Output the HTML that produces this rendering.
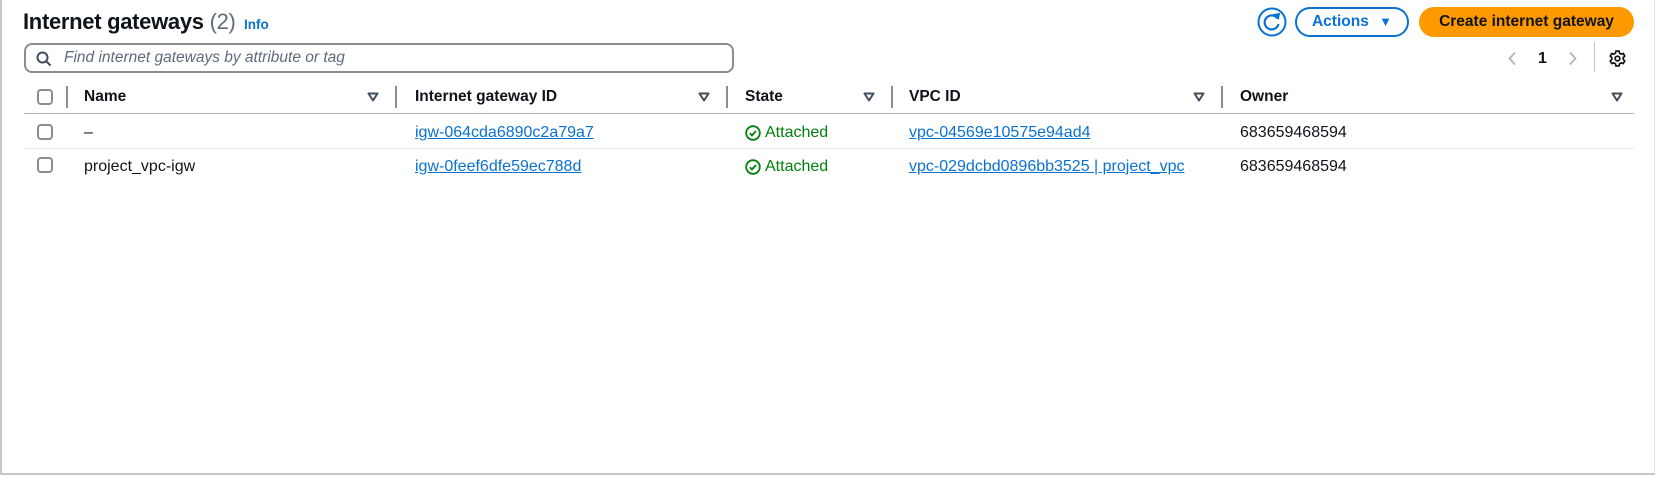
<!DOCTYPE html>
<html><head><meta charset="utf-8"><style>
*{box-sizing:border-box;margin:0;padding:0}
body{width:1656px;height:477px;background:#fff;font-family:"Liberation Sans",Arial,sans-serif;color:#0f141a;position:relative;overflow:hidden}
.a{position:absolute;white-space:nowrap}
.frame{position:absolute;left:0;top:-2px;width:1655px;height:477px;border-left:2px solid #c6c6cd;border-right:1px solid #e0e0e0;border-bottom:2px solid #c6c6cd}
h1{position:absolute;left:23px;top:9px;font-size:22px;font-weight:bold;letter-spacing:-0.3px}
h1 span{font-weight:normal;color:#5f6b7a}
.info{position:absolute;left:244px;top:17px;font-size:13.5px;font-weight:bold;color:#0972d3}
.search{position:absolute;left:24px;top:43px;width:710px;height:30px;border:2px solid #8c8c94;border-radius:8px}
.search .t{position:absolute;left:38px;top:4px;font-size:15.5px;font-style:italic;color:#5f6b7a}
.btn{position:absolute;top:7px;height:30px;border-radius:15px;font-weight:bold;font-size:15.5px;text-align:center;line-height:26px}
.act{left:1295px;width:114px;border:2px solid #0972d3;color:#0972d3}
.cr{left:1419px;width:215px;background:#ff9900;color:#0f141a;line-height:30px}
.th{top:88px;font-size:15.5px;font-weight:bold;color:#0f141a}
.sep{position:absolute;top:86px;width:2px;height:22px;background:#8c8c94}
.hl{position:absolute;left:24px;width:1610px;height:1px}
.cb{position:absolute;left:37px;width:16px;height:16px;border:2px solid #8c8c94;border-radius:4px}
.td{font-size:16px}
.lk{color:#0972d3;text-decoration:underline}
.st{color:#037f0c}
.fl{position:absolute;top:92px}
</style></head><body>
<div class="frame"></div>
<h1>Internet gateways <span>(2)</span></h1>
<div class="info">Info</div>
<div class="search"><svg class="a" style="left:10px;top:6px" width="16" height="16" viewBox="0 0 16 16"><circle cx="6.5" cy="6.5" r="5" fill="none" stroke="#414d5c" stroke-width="2"/><path d="M10 10l4.5 4.5" stroke="#414d5c" stroke-width="2"/></svg><div class="t">Find internet gateways by attribute or tag</div></div>
<svg class="a" style="left:1257px;top:7px" width="30" height="30" viewBox="0 0 30 30"><circle cx="15" cy="15" r="13.5" fill="none" stroke="#0972d3" stroke-width="2"/><path d="M20.5 11.5A7 7 0 1 0 21.5 17" fill="none" stroke="#0972d3" stroke-width="2.2"/><path d="M17 7.5l4.5 4.5l1-5.5z" fill="#0972d3" stroke="#0972d3" stroke-width="1"/></svg>
<div class="btn act">Actions <span style="font-size:13px;margin-left:6px">▼</span></div>
<div class="btn cr">Create internet gateway</div>
<svg class="a" style="left:1507px;top:51px" width="10" height="15" viewBox="0 0 10 15"><path d="M8 1.5L2.5 7.5L8 13.5" fill="none" stroke="#b4b4bb" stroke-width="1.8"/></svg>
<div class="a" style="left:1538px;top:50px;font-size:16px;font-weight:bold">1</div>
<svg class="a" style="left:1568px;top:51px" width="10" height="15" viewBox="0 0 10 15"><path d="M2 1.5L7.5 7.5L2 13.5" fill="none" stroke="#b4b4bb" stroke-width="1.8"/></svg>
<div class="a" style="left:1594px;top:42px;width:1px;height:30px;background:#c6c6cd"></div>
<svg class="a" style="left:1609px;top:50px" width="17" height="17" viewBox="0 0 16 16"><path d="M6.5 1h3l.4 2 1.6.9 1.9-.7 1.5 2.6-1.5 1.3v1.8l1.5 1.3-1.5 2.6-1.9-.7-1.6.9-.4 2h-3l-.4-2-1.6-.9-1.9.7L1.1 10.2l1.5-1.3V7.1L1.1 5.8 2.6 3.2l1.9.7 1.6-.9z" fill="none" stroke="#0f141a" stroke-width="1.6" stroke-linejoin="round"/><circle cx="8" cy="8" r="2.2" fill="none" stroke="#0f141a" stroke-width="1.6"/></svg>

<div class="cb" style="top:89px"></div>
<div class="sep" style="left:66px"></div>
<div class="a th" style="left:84px">Name</div>
<div class="a th" style="left:415px">Internet gateway ID</div>
<div class="a th" style="left:745px">State</div>
<div class="a th" style="left:909px">VPC ID</div>
<div class="a th" style="left:1240px">Owner</div>
<div class="sep" style="left:395px"></div><div class="sep" style="left:726px"></div><div class="sep" style="left:891px"></div><div class="sep" style="left:1221px"></div>
<svg class="fl" style="left:367px" width="12" height="10" viewBox="0 0 12 10"><path d="M1.5 1.5h9L6 8.5z" fill="none" stroke="#414d5c" stroke-width="2" stroke-linejoin="round"/></svg>
<svg class="fl" style="left:698px" width="12" height="10" viewBox="0 0 12 10"><path d="M1.5 1.5h9L6 8.5z" fill="none" stroke="#414d5c" stroke-width="2" stroke-linejoin="round"/></svg>
<svg class="fl" style="left:863px" width="12" height="10" viewBox="0 0 12 10"><path d="M1.5 1.5h9L6 8.5z" fill="none" stroke="#414d5c" stroke-width="2" stroke-linejoin="round"/></svg>
<svg class="fl" style="left:1193px" width="12" height="10" viewBox="0 0 12 10"><path d="M1.5 1.5h9L6 8.5z" fill="none" stroke="#414d5c" stroke-width="2" stroke-linejoin="round"/></svg>
<svg class="fl" style="left:1611px" width="12" height="10" viewBox="0 0 12 10"><path d="M1.5 1.5h9L6 8.5z" fill="none" stroke="#414d5c" stroke-width="2" stroke-linejoin="round"/></svg>
<div class="hl" style="top:113px;background:#b4b4bb"></div>

<div class="cb" style="top:124px"></div>
<div class="a td" style="left:84px;top:124px">–</div>
<div class="a td lk" style="left:415px;top:124px">igw-064cda6890c2a79a7</div>
<svg class="a" style="left:745px;top:125px" width="16" height="16" viewBox="0 0 16 16"><circle cx="8" cy="8" r="6.8" fill="none" stroke="#037f0c" stroke-width="1.8"/><path d="M4.8 8.2l2.2 2.2 4-4.4" fill="none" stroke="#037f0c" stroke-width="1.8"/></svg>
<div class="a td st" style="left:765px;top:124px">Attached</div>
<div class="a td lk" style="left:909px;top:124px">vpc-04569e10575e94ad4</div>
<div class="a td" style="left:1240px;top:124px">683659468594</div>
<div class="hl" style="top:148px;background:#e9ebed"></div>

<div class="cb" style="top:157px"></div>
<div class="a td" style="left:84px;top:158px">project_vpc-igw</div>
<div class="a td lk" style="left:415px;top:158px">igw-0feef6dfe59ec788d</div>
<svg class="a" style="left:745px;top:159px" width="16" height="16" viewBox="0 0 16 16"><circle cx="8" cy="8" r="6.8" fill="none" stroke="#037f0c" stroke-width="1.8"/><path d="M4.8 8.2l2.2 2.2 4-4.4" fill="none" stroke="#037f0c" stroke-width="1.8"/></svg>
<div class="a td st" style="left:765px;top:158px">Attached</div>
<div class="a td lk" style="left:909px;top:158px">vpc-029dcbd0896bb3525 | project_vpc</div>
<div class="a td" style="left:1240px;top:158px">683659468594</div>
</body></html>
